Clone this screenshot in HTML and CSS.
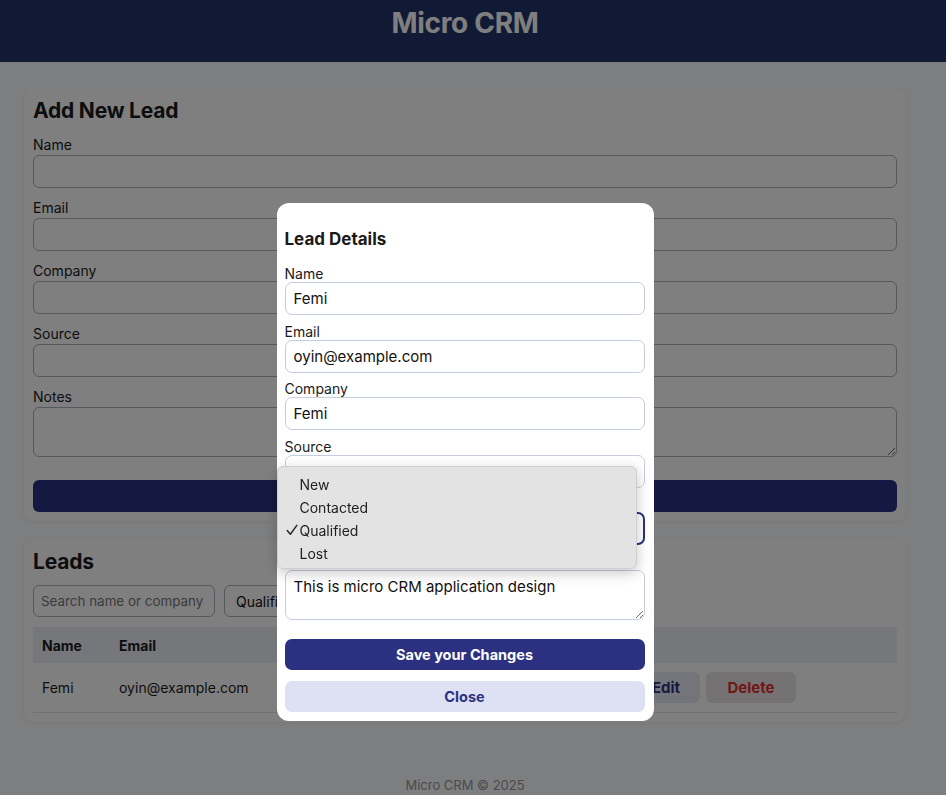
FILE: index.html
```html
<!DOCTYPE html>
<html lang="en">
<head>
<meta charset="utf-8">
<title>Micro CRM</title>
<link rel="stylesheet" href="styles.css">
</head>
<body>
<header class="topbar"><h1>Micro CRM</h1></header>
<main class="container">
  <section class="card">
    <h2 class="card-title">Add New Lead</h2>
    <form class="lead-form">
      <label class="field"><span class="field-label">Name</span><input class="input" type="text"></label>
      <label class="field"><span class="field-label">Email</span><input class="input" type="email"></label>
      <label class="field"><span class="field-label">Company</span><input class="input" type="text"></label>
      <label class="field"><span class="field-label">Source</span><input class="input" type="text"></label>
      <label class="field"><span class="field-label">Notes</span><textarea class="input textarea"></textarea></label>
      <button type="button" class="btn btn-primary btn-add"><span class="covered">Add Lead</span></button>
    </form>
  </section>
  <section class="card leads-card">
    <h2 class="card-title">Leads</h2>
    <div class="filters">
      <input class="input search" type="text" placeholder="Search name or company">
      <div class="input filter-select">Qualified</div>
    </div>
    <table class="leads-table">
      <thead>
        <tr><th class="c-name">Name</th><th class="c-email">Email</th><th class="c-company"></th><th class="c-status"></th><th class="c-actions"></th></tr>
      </thead>
      <tbody>
        <tr>
          <td>Femi</td><td>oyin@example.com</td><td></td><td></td>
          <td class="actions"><button class="btn btn-edit">Edit</button><button class="btn btn-delete">Delete</button></td>
        </tr>
      </tbody>
    </table>
  </section>
</main>
<footer class="footer">Micro CRM © 2025</footer>

<div class="overlay">
  <div class="modal">
    <h3 class="modal-title">Lead Details</h3>
    <label class="mfield"><span class="mlabel">Name</span><input class="minput" type="text" value="Femi"></label>
    <label class="mfield"><span class="mlabel">Email</span><input class="minput" type="text" value="oyin@example.com"></label>
    <label class="mfield"><span class="mlabel">Company</span><input class="minput" type="text" value="Femi"></label>
    <label class="mfield"><span class="mlabel">Source</span><input class="minput" type="text" value=""></label>
    <div class="mfield"><span class="mlabel covered">Status</span>
      <div class="minput mselect"><span class="covered">Qualified</span>
        <svg class="chev" width="10" height="10" viewBox="0 0 10 10"><path d="M2 3.5 L5 6.5 L8 3.5" fill="none" stroke="#111" stroke-width="1.6" stroke-linecap="round" stroke-linejoin="round"/></svg>
      </div>
    </div>
    <label class="mfield"><span class="mlabel covered">Notes</span><textarea class="minput mtextarea">This is micro CRM application design</textarea></label>
    <button type="button" class="mbtn mbtn-save">Save your Changes</button>
    <button type="button" class="mbtn mbtn-close">Close</button>

    <div class="popup">
      <div class="popup-item">New</div>
      <div class="popup-item">Contacted</div>
      <div class="popup-item checked"><svg class="check" width="12" height="12" viewBox="0 0 12 12"><path d="M1.2 6.6 L4.4 10.2 L10.8 1.4" fill="none" stroke="#2a2a2a" stroke-width="1.5" stroke-linecap="round" stroke-linejoin="round"/></svg>Qualified</div>
      <div class="popup-item">Lost</div>
    </div>
  </div>
</div>
</body>
</html>
```

FILE: styles.css
```css
* { box-sizing: border-box; }
html, body { margin: 0; padding: 0; }
body {
  font-family: Inter, "Noto Sans", "Liberation Sans", sans-serif;
  background: #fbfcfe;
  color: #1a1a1a;
  font-size: 14px;
  min-height: 795px;
}
.covered { visibility: hidden; }
.topbar {
  background: #23346b;
  height: 62px;
  padding-right: 16px;
  display: flex;
  align-items: center;
  justify-content: center;
}
.topbar h1 {
  margin: 0;
  color: #ffffff;
  font-size: 28px;
  font-weight: 700;
  letter-spacing: -0.3px;
  position: relative;
  top: -8px;
}
.container {
  padding: 27px 40px 0 24px;
  display: flex;
  flex-direction: column;
  gap: 18px;
}
.card {
  background: #ffffff;
  border-radius: 10px;
  padding: 9px;
  box-shadow: 0 1px 4px rgba(0,0,0,0.06);
}
.card-title {
  margin: 0 0 12px;
  font-size: 21px;
  font-weight: 700;
  line-height: 26px;
  letter-spacing: -0.2px;
}
.lead-form { display: flex; flex-direction: column; gap: 11px; }
.field { display: flex; flex-direction: column; }
.field-label { line-height: 17px; margin-bottom: 2px; }
.input {
  height: 33px;
  border: 1px solid #a9b0bf;
  border-radius: 6px;
  background: #fff;
  font: inherit;
  padding: 0 8px;
}
.textarea { height: 50px; resize: vertical; }
.btn { font: inherit; border: none; cursor: pointer; }
.btn-primary {
  background: #2b3080;
  color: #fff;
  font-weight: 700;
  height: 32px;
  border-radius: 6px;
  margin-top: 12px;
}
.leads-card .card-title { margin: 1px 0 10px; }
.filters { display: flex; gap: 9px; margin-bottom: 10px; }
.search { width: 182px; height: 32px; font-size: 13.4px; color: #222; padding: 0 7px; }
.search::placeholder { color: #777; }
.filter-select { width: 120px; height: 32px; display: flex; align-items: center; padding-left: 11px; color: #111; }
.leads-table { width: 100%; border-collapse: collapse; table-layout: fixed; }
.leads-table th {
  background: #eceef6;
  text-align: left;
  font-weight: 700;
  height: 36px;
  padding: 0 9px;
}
.leads-table td {
  height: 49px;
  padding: 0 9px;
  border-bottom: 1px solid #e2e4ea;
}
.c-name { width: 77px; }
.c-email { width: 200px; }
.c-company { width: 160px; }
.c-status { width: 153px; }
.actions { white-space: nowrap; }
.btn-edit, .btn-delete {
  height: 31px;
  border-radius: 6px;
  font-weight: 700;
  font-size: 15px;
  vertical-align: middle;
}
.btn-edit { background: #e8eaf6; color: #2b3080; width: 68px; margin-right: 6px; }
.btn-delete { background: #ebe4e8; color: #e0302b; width: 90px; }
.footer {
  text-align: center;
  color: #979797;
  font-size: 13px;
  margin-top: 55px;
  padding-right: 16px;
}
.overlay {
  position: fixed;
  inset: 0;
  background: rgba(0,0,0,0.5);
  display: flex;
  justify-content: center;
  align-items: flex-start;
  padding: 203px 16px 0 0;
}
.modal {
  position: relative;
  width: 377px;
  background: #fff;
  border-radius: 12px;
  padding: 26px 9px 9px 8px;
  display: flex;
  flex-direction: column;
}
.modal-title {
  margin: 0 0 16px;
  font-size: 17px;
  line-height: 20px;
  font-weight: 700;
}
.mfield { display: flex; flex-direction: column; margin-bottom: 7.5px; }
.mlabel { line-height: 17px; }
.minput {
  height: 33px;
  border: 1px solid #c6cde0;
  border-radius: 7px;
  background: #fff;
  font: inherit;
  font-size: 15px;
  padding: 0 8px;
  color: #111;
}
.mselect {
  display: flex;
  align-items: center;
  justify-content: space-between;
  border: 2px solid #2b3080;
  padding: 0 5px 0 7px;
}
.chev { transform: rotate(-20deg); }
.mtextarea { height: 50px; resize: vertical; padding: 7px 8px; line-height: 18px; }
.mbtn {
  font: inherit;
  font-weight: 700;
  font-size: 14.5px;
  border: none;
  border-radius: 7px;
  height: 31px;
}
.mbtn-save { background: #2b3080; color: #fff; margin-top: 12px; }
.mbtn-close { background: #dde1f3; color: #2b3080; margin-top: 11px; }
.popup {
  position: absolute;
  left: 0;
  top: 263px;
  width: 360px;
  height: 103px;
  background: #e3e3e3;
  border: 1px solid #cfcfcf;
  border-radius: 6px;
  box-shadow: 0 4px 14px rgba(0,0,0,0.22);
  padding: 6px 0;
  color: #222;
  font-size: 14px;
}
.popup-item {
  height: 23px;
  line-height: 23px;
  padding-left: 22px;
  position: relative;
}
.check {
  position: absolute;
  left: 8px;
  top: 5px;
}
```
